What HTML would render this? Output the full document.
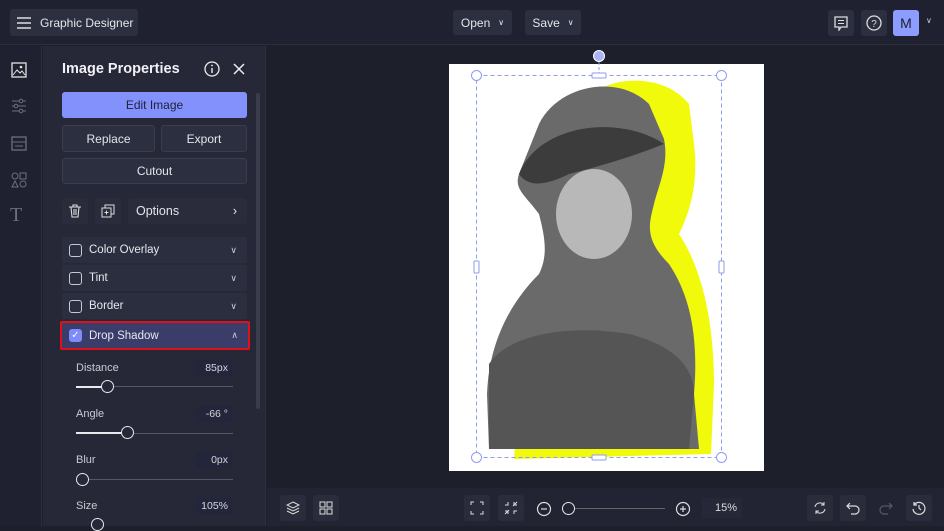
<!DOCTYPE html>
<html><head><style>
*{margin:0;padding:0;box-sizing:border-box}
body{width:944px;height:526px;background:#1d1f2b;font-family:"Liberation Sans",sans-serif;color:#e6e7ee;position:relative;overflow:hidden;font-size:12px}
.a{position:absolute}
.btn{position:absolute;background:#2c2f3f;border-radius:3px;display:flex;align-items:center;justify-content:center;font-size:12px;color:#e4e5ec;white-space:nowrap}
.row{position:absolute;left:62px;width:185px;height:26px;background:#2b2e3e;border-radius:2px;display:flex;align-items:center;font-size:11.5px;white-space:nowrap}
.cb{width:13px;height:13px;border:1.3px solid #c8c9d2;border-radius:3px;margin:0 7px 0 7px}
.chev{position:absolute;right:10px;font-size:9px;color:#ccc}
.lbl{position:absolute;left:76px;font-size:11px;color:#c9cad3}
.val{position:absolute;left:196px;width:36px;height:16px;background:#23253a;font-size:10.5px;text-align:right;padding-right:4px;line-height:16px;color:#d5d6de}
.trk{position:absolute;left:76px;width:157px;height:1px;background:#555868}
.fill{position:absolute;left:76px;height:2px;background:#e8e8ee}
.knob{position:absolute;width:13px;height:13px;border-radius:50%;border:1.5px solid #e8e8ee;background:#262838}
.ib{position:absolute;width:26px;height:26px;background:#2a2c3b;border-radius:3px}
</style></head><body>
<div class="a" style="left:0;top:0;width:944px;height:45px;background:#1f2130;border-bottom:1px solid #2c2e3d"></div>
<div class="btn" style="left:10px;top:9px;width:128px;height:27px;justify-content:flex-start;padding-left:7px;font-size:12px"><svg width="14" height="12" style="margin-right:9px;flex:none"><path d="M0 1h14M0 6h14M0 11h14" stroke="#ddd" stroke-width="1.4"/></svg>Graphic Designer</div>
<div class="btn" style="left:453px;top:10px;width:59px;height:25px">Open <span style="font-size:8px;margin-left:8px">&#8744;</span></div>
<div class="btn" style="left:525px;top:10px;width:56px;height:25px">Save <span style="font-size:8px;margin-left:8px">&#8744;</span></div>
<div class="btn" style="left:828px;top:10px;width:26px;height:26px"><svg width="14" height="15"><path d="M1 1h12v10H7l-2 3v-3H1z" fill="none" stroke="#ddd" stroke-width="1.3"/><path d="M4 4.5h6M4 7.5h6" stroke="#ddd"/></svg></div>
<div class="btn" style="left:861px;top:10px;width:26px;height:26px"><svg width="16" height="16"><circle cx="8" cy="8" r="7" fill="none" stroke="#ddd" stroke-width="1.3"/><text x="8" y="12" font-size="10" fill="#ddd" text-anchor="middle" font-family="Liberation Sans">?</text></svg></div>
<div class="btn" style="left:893px;top:10px;width:26px;height:26px;background:#8c9cff;color:#1d1f2b;font-size:14px">M</div>
<div class="a" style="left:926px;top:16px;font-size:8px;color:#ccc">&#8744;</div>
<div class="a" style="left:0;top:46px;width:42px;height:480px;background:#1f2130;border-right:1px solid #2c2e3d"></div>
<svg class="a" style="left:11px;top:62px" width="16" height="16"><rect x="1" y="1" width="14" height="14" fill="none" stroke="#e5e5e5" stroke-width="1.3"/><path d="M2 13l4-5 3 3 2-2 3 4" fill="none" stroke="#e5e5e5"/><circle cx="10" cy="5" r="1.3" fill="#e5e5e5"/></svg>
<svg class="a" style="left:11px;top:98px" width="16" height="16"><path d="M1 3h14M1 8h14M1 13h14" stroke="#6b6e7d"/><circle cx="10" cy="3" r="1.8" fill="#1f2130" stroke="#6b6e7d"/><circle cx="5" cy="8" r="1.8" fill="#1f2130" stroke="#6b6e7d"/><circle cx="10" cy="13" r="1.8" fill="#1f2130" stroke="#6b6e7d"/></svg>
<svg class="a" style="left:11px;top:136px" width="16" height="15"><rect x="1" y="1" width="14" height="13" fill="none" stroke="#6b6e7d" stroke-width="1.3"/><path d="M1 6h14M4 10h8" stroke="#6b6e7d"/></svg>
<svg class="a" style="left:11px;top:172px" width="16" height="16"><circle cx="4" cy="4" r="3" fill="none" stroke="#6b6e7d"/><rect x="9" y="1" width="6" height="6" fill="none" stroke="#6b6e7d"/><path d="M4 9l3 6H1z" fill="none" stroke="#6b6e7d"/><circle cx="12" cy="12" r="3" fill="none" stroke="#6b6e7d"/></svg>
<div class="a" style="left:10px;top:204px;font-size:20px;color:#6b6e7d;font-family:'Liberation Serif',serif">T</div>
<div class="a" style="left:43px;top:46px;width:223px;height:480px;background:#262838;border-right:1px solid #2c2e3d"></div>
<div class="a" style="left:62px;top:61px;font-size:14.5px;font-weight:bold;color:#f0f0f5">Image Properties</div>
<svg class="a" style="left:204px;top:61px" width="16" height="16"><circle cx="8" cy="8" r="7" fill="none" stroke="#eee" stroke-width="1.3"/><path d="M8 7v5" stroke="#eee" stroke-width="1.4"/><circle cx="8" cy="4.5" r="0.9" fill="#eee"/></svg>
<svg class="a" style="left:233px;top:63px" width="12" height="12"><path d="M1 1l10 10M11 1L1 11" stroke="#eee" stroke-width="1.5"/></svg>
<div class="a" style="left:256px;top:93px;width:4px;height:316px;background:#3a3c4c;border-radius:2px"></div>
<div class="btn" style="left:62px;top:92px;width:185px;height:26px;background:#8391fc;color:#1f2238">Edit Image</div>
<div class="btn" style="left:62px;top:125px;width:93px;height:27px;border:1px solid #3a3d4e">Replace</div>
<div class="btn" style="left:161px;top:125px;width:86px;height:27px;border:1px solid #3a3d4e">Export</div>
<div class="btn" style="left:62px;top:158px;width:185px;height:26px;border:1px solid #3a3d4e">Cutout</div>
<div class="btn" style="left:62px;top:198px;width:26px;height:26px;background:#2a2c3b"><svg width="12" height="14"><path d="M0 3h12M4 3V1h4v2M2 3l1 10h6l1-10M5 5v6M7 5v6" fill="none" stroke="#ddd" stroke-width="1.1"/></svg></div>
<div class="btn" style="left:95px;top:198px;width:26px;height:26px;background:#2a2c3b"><svg width="14" height="14"><rect x="1" y="4" width="9" height="9" fill="none" stroke="#ddd"/><path d="M4 4V1h9v9h-3M5.5 6.5v4M3.5 8.5h4" fill="none" stroke="#ddd"/></svg></div>
<div class="btn" style="left:128px;top:198px;width:119px;height:26px;background:#2a2c3b;justify-content:space-between;padding:0 10px 0 8px;font-size:12.5px"><span>Options</span><span>&#8250;</span></div>
<div class="row" style="top:237px"><div class="cb"></div>Color Overlay<span class="chev">&#8744;</span></div>
<div class="row" style="top:265px"><div class="cb"></div>Tint<span class="chev">&#8744;</span></div>
<div class="row" style="top:293px"><div class="cb"></div>Border<span class="chev">&#8744;</span></div>
<div class="row" style="top:321px;background:#3a3c6a;border:2.5px solid #e01018;left:60px;width:190px;height:29px"><div class="cb" style="background:#7d8bfb;border-color:#7d8bfb;color:#fff;font-size:10px;line-height:11px;text-align:center;margin-left:7px">✓</div>Drop Shadow<span class="chev">&#8743;</span></div>
<div class="lbl" style="top:362px">Distance</div><div class="val" style="top:360px">85px</div>
<div class="trk" style="top:386px"></div><div class="fill" style="top:386px;width:30px"></div><div class="knob" style="left:101px;top:380px"></div>
<div class="lbl" style="top:408px">Angle</div><div class="val" style="top:406px">-66 °</div>
<div class="trk" style="top:433px"></div><div class="fill" style="top:432px;width:50px"></div><div class="knob" style="left:121px;top:426px"></div>
<div class="lbl" style="top:454px">Blur</div><div class="val" style="top:452px">0px</div>
<div class="trk" style="top:479px"></div><div class="knob" style="left:76px;top:473px"></div>
<div class="lbl" style="top:500px">Size</div><div class="val" style="top:498px">105%</div>
<div class="knob" style="left:91px;top:518px"></div>
<div class="a" style="left:449px;top:64px;width:315px;height:407px;background:#fff"></div>
<svg class="a" style="left:449px;top:64px" width="315" height="407">
<path d="M150 25 C180 10 220 15 240 40 L245 80 C250 120 240 150 230 170 C250 200 265 250 265 320 L262 390 L65 395 L70 330 C80 260 110 230 120 190 Z" fill="#f0fa0a"/>
<path d="M90 60 C110 20 170 10 200 40 L215 75 C220 100 210 120 205 140 C200 160 195 175 220 200 C240 230 250 270 245 330 L250 385 L40 385 L38 330 C40 280 60 240 90 210 C100 190 95 170 90 150 C75 130 65 125 70 110 Z" fill="#6a6a6a"/>
<path d="M70 110 C90 60 170 50 215 80 C190 90 160 100 120 110 C100 120 80 125 70 110 Z" fill="#3c3c3c"/>
<ellipse cx="145" cy="150" rx="38" ry="45" fill="#b8b8b8"/>
<path d="M40 300 C60 270 120 260 180 270 C220 280 245 300 245 330 L240 385 L40 385 Z" fill="#555"/>
</svg>
<svg class="a" style="left:466px;top:48px" width="266" height="420">
<rect x="10.5" y="27.5" width="245" height="382" fill="none" stroke="#8e9cf0" stroke-dasharray="4 3"/>
<path d="M133 14v13" stroke="#8e9cf0" stroke-dasharray="3 2"/>
<circle cx="133" cy="8" r="5.5" fill="#a9b4f5" stroke="#fff"/>
<g fill="#fff" stroke="#8e9cf0"><circle cx="10.5" cy="27.5" r="5"/><circle cx="255.5" cy="27.5" r="5"/><circle cx="10.5" cy="409.5" r="5"/><circle cx="255.5" cy="409.5" r="5"/>
<rect x="126" y="25" width="14" height="5" rx="1"/><rect x="126" y="407" width="14" height="5" rx="1"/><rect x="8" y="213" width="5" height="12" rx="1"/><rect x="253" y="213" width="5" height="12" rx="1"/></g>
</svg>
<div class="a" style="left:267px;top:488px;width:677px;height:38px;background:#222433"></div>
<div class="ib" style="left:280px;top:495px"></div><svg class="a" style="left:286px;top:501px" width="14" height="14"><path d="M7 1l6 3-6 3-6-3z M1 7l6 3 6-3M1 10l6 3 6-3" fill="none" stroke="#ddd"/></svg>
<div class="ib" style="left:313px;top:495px"></div><svg class="a" style="left:319px;top:501px" width="14" height="14"><g fill="none" stroke="#ddd"><rect x="1" y="1" width="5" height="5"/><rect x="8" y="1" width="5" height="5"/><rect x="1" y="8" width="5" height="5"/><rect x="8" y="8" width="5" height="5"/></g></svg>
<div class="ib" style="left:464px;top:495px"></div><svg class="a" style="left:470px;top:501px" width="14" height="14"><path d="M1 4V1h3M10 1h3v3M13 10v3h-3M4 13H1v-3" fill="none" stroke="#ddd"/></svg>
<div class="ib" style="left:498px;top:495px"></div><svg class="a" style="left:504px;top:501px" width="14" height="14"><path d="M1 4h3V1M10 1v3h3M13 10h-3v3M4 13v-3H1M9 5l4-4M5 9l-4 4" fill="none" stroke="#ddd"/></svg>
<svg class="a" style="left:536px;top:501px" width="16" height="16"><circle cx="8" cy="8" r="6.5" fill="none" stroke="#ddd" stroke-width="1.2"/><path d="M5 8h6" stroke="#ddd" stroke-width="1.2"/></svg>
<div class="a" style="left:575px;top:508px;width:90px;height:1px;background:#666"></div>
<div class="knob" style="left:562px;top:502px;width:13px;height:13px;background:#222433"></div>
<svg class="a" style="left:675px;top:501px" width="16" height="16"><circle cx="8" cy="8" r="6.5" fill="none" stroke="#ddd" stroke-width="1.2"/><path d="M5 8h6M8 5v6" stroke="#ddd" stroke-width="1.2"/></svg>
<div class="a" style="left:702px;top:498px;width:40px;height:20px;background:#262838;font-size:11px;text-align:right;padding-right:5px;line-height:20px;color:#ddd">15%</div>
<div class="ib" style="left:807px;top:495px"></div><svg class="a" style="left:813px;top:501px" width="14" height="14"><path d="M2 6a5 5 0 0 1 9-2M12 8a5 5 0 0 1-9 2M11 1v3H8M3 13v-3h3" fill="none" stroke="#ddd"/></svg>
<div class="ib" style="left:840px;top:495px"></div><svg class="a" style="left:846px;top:501px" width="14" height="14"><path d="M4 2L1 5l3 3M1 5h8a4 4 0 0 1 0 8H5" fill="none" stroke="#ddd" stroke-width="1.2"/></svg>
<svg class="a" style="left:879px;top:501px" width="14" height="14"><path d="M10 2l3 3-3 3M13 5H5a4 4 0 0 0 0 8h4" fill="none" stroke="#555868" stroke-width="1.2"/></svg>
<div class="ib" style="left:906px;top:495px"></div><svg class="a" style="left:912px;top:501px" width="14" height="14"><path d="M2 4a6 6 0 1 1-1 4M2 1v3h3M7 4v3l2 2" fill="none" stroke="#ddd" stroke-width="1.2"/></svg>
</body></html>
